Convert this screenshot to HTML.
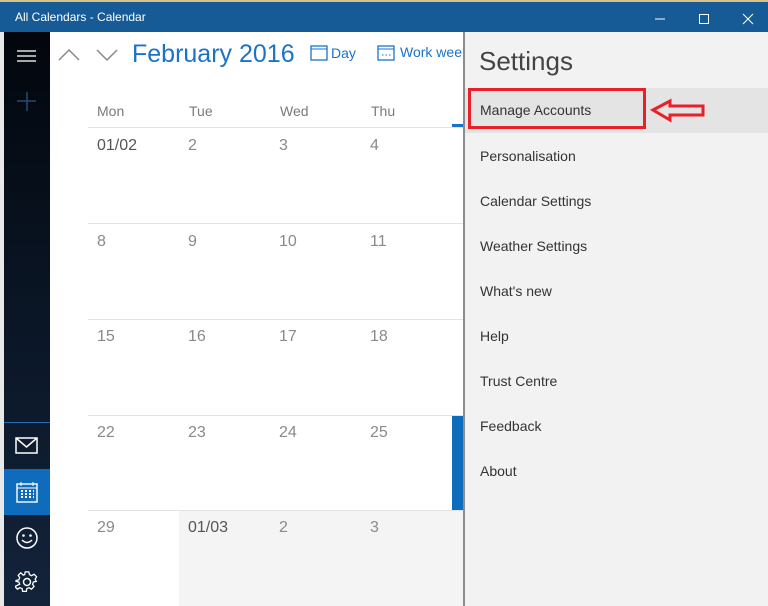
<!DOCTYPE html>
<html><head><meta charset="utf-8"><style>
*{margin:0;padding:0;box-sizing:border-box}
body{width:768px;height:606px;overflow:hidden;background:#fff;font-family:"Liberation Sans",sans-serif;position:relative}
.abs{position:absolute}
.title{left:0;top:0;width:768px;height:32px;background:#175b96;border-top:2px solid #d8c48a}
.title span{position:absolute;left:15px;top:8px;color:#fff;font-size:12px}
.side{left:4px;top:32px;width:46px;height:574px;background:linear-gradient(180deg,#03060c 0%,#0a1626 50%,#13233a 100%)}
.cal{left:50px;top:32px;width:413px;height:574px;background:#fff}
.hdr{color:#7a7a7a;font-size:14px}
.num{color:#8a8a8a;font-size:16px}
.hl{position:absolute;height:1px;background:#e3e3e3;left:88px;width:375px}
.set{left:463px;top:32px;width:305px;height:574px;background:#f2f2f2;border-left:2px solid #8c8c8c}
.item{position:absolute;left:15px;font-size:14px;color:#333}
</style></head><body>
<div class="abs title"><span>All Calendars - Calendar</span>
<svg class="abs" style="left:650px;top:8px" width="110" height="18"><line x1="5" y1="9" x2="15" y2="9" stroke="#fff"/><rect x="49.5" y="4.5" width="9" height="9" fill="none" stroke="#fff"/><path d="M93 4l10 10M103 4l-10 10" stroke="#fff"/></svg></div>
<div class="abs" style="left:0;top:32px;width:4px;height:574px;background:#e8e8e8"></div>
<div class="abs side">
<svg class="abs" style="left:12px;top:16px" width="22" height="16"><path d="M1 3h19M1 8h19M1 13h19" stroke="#ddd" stroke-width="1.5"/></svg>
<svg class="abs" style="left:12px;top:59px" width="22" height="22"><path d="M11 1v19M1 10h19" stroke="#2a4a78" stroke-width="1.5"/></svg>
<div class="abs" style="left:0;top:390px;width:46px;height:1px;background:#2a6ab0"></div>
<svg class="abs" style="left:11px;top:404px" width="24" height="20"><rect x="1" y="2" width="21" height="15" fill="none" stroke="#fff" stroke-width="1.5"/><path d="M1 2l10.5 9L22 2" fill="none" stroke="#fff" stroke-width="1.5"/></svg>
<div class="abs" style="left:0;top:437px;width:46px;height:46px;background:#0f6cbd">
<svg class="abs" style="left:12px;top:12px" width="22" height="22"><rect x="1" y="3" width="20" height="18" fill="none" stroke="#fff" stroke-width="1.4"/><path d="M1 7h20M5 1v4M17 1v4" stroke="#fff"/><path d="M5 10h2M9 10h2M13 10h2M17 10h1M5 13h2M9 13h2M13 13h2M17 13h1M5 16h2M9 16h2M13 16h2M17 16h1" stroke="#fff" stroke-width="2"/></svg></div>
<svg class="abs" style="left:11px;top:494px" width="24" height="24"><circle cx="12" cy="12" r="10" fill="none" stroke="#fff" stroke-width="1.5"/><circle cx="8.5" cy="9.5" r="1.3" fill="#fff"/><circle cx="15.5" cy="9.5" r="1.3" fill="#fff"/><path d="M7 14q5 5 10 0" fill="none" stroke="#fff" stroke-width="1.5"/></svg>
<svg class="abs" style="left:11px;top:538px" width="24" height="24" viewBox="0 0 24 24"><path d="M10 2h4l.6 3 2.4 1.2 2.6-1.6 2.8 2.8-1.6 2.6L22 12.4l-3 .6v0l-1 2.4 1.6 2.6-2.8 2.8-2.6-1.6-2.4 1-.6 3h-4l-.6-3-2.4-1-2.6 1.6-2.8-2.8L4 15.4 3 13l-3-.6v-1l3-.6 1-2.4-1.6-2.6 2.8-2.8L7.8 5.6 9.4 5z" transform="translate(1 0) scale(.92)" fill="none" stroke="#fff" stroke-width="1.4"/><circle cx="12" cy="12" r="3.5" fill="none" stroke="#fff" stroke-width="1.4"/></svg>
</div>
<div class="abs cal"></div>
<svg class="abs" style="left:57px;top:45px" width="64" height="20"><path d="M2 15l10-10 10 10M40 5l10 10 10-10" fill="none" stroke="#888" stroke-width="1.5"/></svg>
<div class="abs" style="left:132px;top:40px;font-size:25px;color:#1a73c8">February 2016</div>
<svg class="abs" style="left:310px;top:44px" width="18" height="17"><rect x="1" y="2" width="16" height="14" fill="none" stroke="#1a73c8" stroke-width="1.3"/><path d="M1 5h16" stroke="#1a73c8"/></svg>
<div class="abs" style="left:331px;top:45px;font-size:14px;color:#1a73c8">Day</div>
<svg class="abs" style="left:377px;top:44px" width="18" height="17"><rect x="1" y="2" width="16" height="14" fill="none" stroke="#1a73c8" stroke-width="1.3"/><path d="M1 5h16M5 11h1.5M8.5 11h1.5M12 11h1.5" stroke="#1a73c8"/></svg>
<div class="abs" style="left:400px;top:44px;font-size:14px;color:#1a73c8;width:63px;overflow:hidden;white-space:nowrap">Work week</div>
<div class="abs hdr" style="left:97px;top:103px">Mon</div>
<div class="abs hdr" style="left:189px;top:103px">Tue</div>
<div class="abs hdr" style="left:280px;top:103px">Wed</div>
<div class="abs hdr" style="left:371px;top:103px">Thu</div>
<div class="abs" style="left:452px;top:124px;width:11px;height:3px;background:#1a73c8"></div>
<div class="hl" style="top:127px"></div><div class="hl" style="top:223px"></div><div class="hl" style="top:319px"></div><div class="hl" style="top:415px"></div><div class="hl" style="top:510px"></div>
<div class="abs" style="left:452px;top:416px;width:11px;height:94px;background:#0f6cbd"></div>
<div class="abs" style="left:179px;top:511px;width:284px;height:95px;background:#f4f4f4"></div>
<div class="abs num" style="left:97px;top:137px;color:#555">01/02</div><div class="abs num" style="left:188px;top:137px">2</div><div class="abs num" style="left:279px;top:137px">3</div><div class="abs num" style="left:370px;top:137px">4</div>
<div class="abs num" style="left:97px;top:233px">8</div><div class="abs num" style="left:188px;top:233px">9</div><div class="abs num" style="left:279px;top:233px">10</div><div class="abs num" style="left:370px;top:233px">11</div>
<div class="abs num" style="left:97px;top:328px">15</div><div class="abs num" style="left:188px;top:328px">16</div><div class="abs num" style="left:279px;top:328px">17</div><div class="abs num" style="left:370px;top:328px">18</div>
<div class="abs num" style="left:97px;top:424px">22</div><div class="abs num" style="left:188px;top:424px">23</div><div class="abs num" style="left:279px;top:424px">24</div><div class="abs num" style="left:370px;top:424px">25</div>
<div class="abs num" style="left:97px;top:519px">29</div><div class="abs num" style="left:188px;top:519px;color:#555">01/03</div><div class="abs num" style="left:279px;top:519px">2</div><div class="abs num" style="left:370px;top:519px">3</div>
<div class="abs set">
<div class="abs" style="left:14px;top:14px;font-size:26px;color:#444">Settings</div>
<div class="abs" style="left:0;top:56px;width:303px;height:45px;background:#e4e4e4"></div>
<div class="abs" style="left:3px;top:56px;width:178px;height:41px;border:3px solid #e8202a"></div>
<div class="item" style="top:70px">Manage Accounts</div>
<div class="item" style="top:116px">Personalisation</div>
<div class="item" style="top:161px">Calendar Settings</div>
<div class="item" style="top:206px">Weather Settings</div>
<div class="item" style="top:251px">What's new</div>
<div class="item" style="top:296px">Help</div>
<div class="item" style="top:341px">Trust Centre</div>
<div class="item" style="top:386px">Feedback</div>
<div class="item" style="top:431px">About</div>
<svg class="abs" style="left:185px;top:66px" width="56" height="26"><path d="M3 12L20 3v5h33v9H20v5z" fill="none" stroke="#e8202a" stroke-width="3"/></svg>
</div>
</body></html>
